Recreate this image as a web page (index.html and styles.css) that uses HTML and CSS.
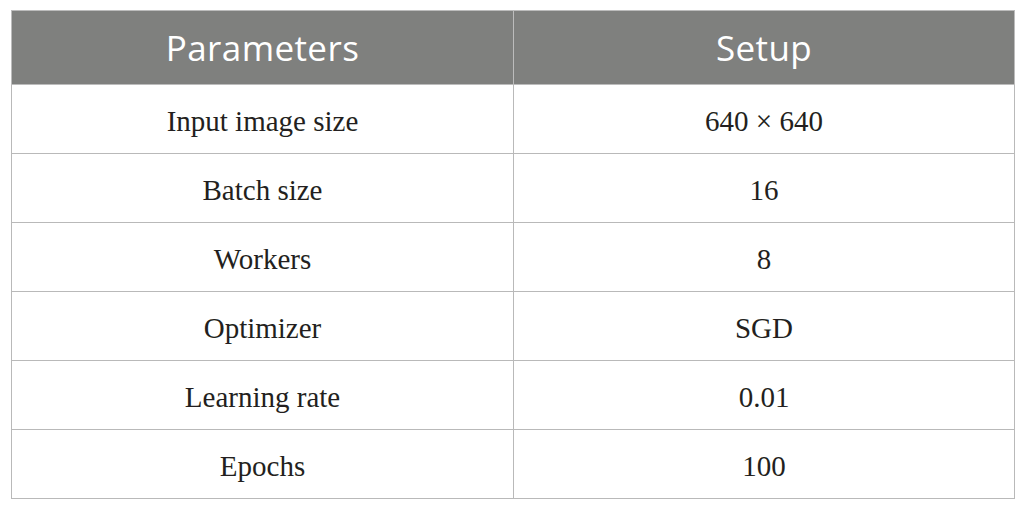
FILE: index.html
```html
<!DOCTYPE html>
<html>
<head>
<meta charset="utf-8">
<link rel="stylesheet" href="styles.css">
</head>
<body>
<table class="params">
  <thead>
    <tr><th>Parameters</th><th>Setup</th></tr>
  </thead>
  <tbody>
    <tr><td>Input image size</td><td>640 × 640</td></tr>
    <tr><td>Batch size</td><td>16</td></tr>
    <tr><td>Workers</td><td>8</td></tr>
    <tr><td>Optimizer</td><td>SGD</td></tr>
    <tr><td>Learning rate</td><td>0.01</td></tr>
    <tr><td>Epochs</td><td>100</td></tr>
  </tbody>
</table>
</body>
</html>
```
FILE: styles.css
```css
html, body {
  margin: 0;
  padding: 0;
  background: #ffffff;
}
body {
  padding: 10px 10px 0 11px;
}
.params {
  border-collapse: collapse;
  width: 1004px;
  table-layout: fixed;
}
.params th {
  background: #7f807e;
  color: #ffffff;
  font-family: "Open Sans", "Noto Sans", sans-serif;
  font-weight: 400;
  font-size: 35px;
  letter-spacing: 0.4px;
  height: 73px;
  padding: 0;
  border: 1px solid #bcbcbc;
  text-align: center;
}
.params td {
  font-family: "Liberation Serif", serif;
  font-size: 29px;
  line-height: 34px;
  color: #231f20;
  height: 65px;
  padding: 3px 0 0 0;
  border: 1px solid #b9b9b9;
  text-align: center;
}
.params th:first-child, .params td:first-child {
  width: 501px;
}
```
